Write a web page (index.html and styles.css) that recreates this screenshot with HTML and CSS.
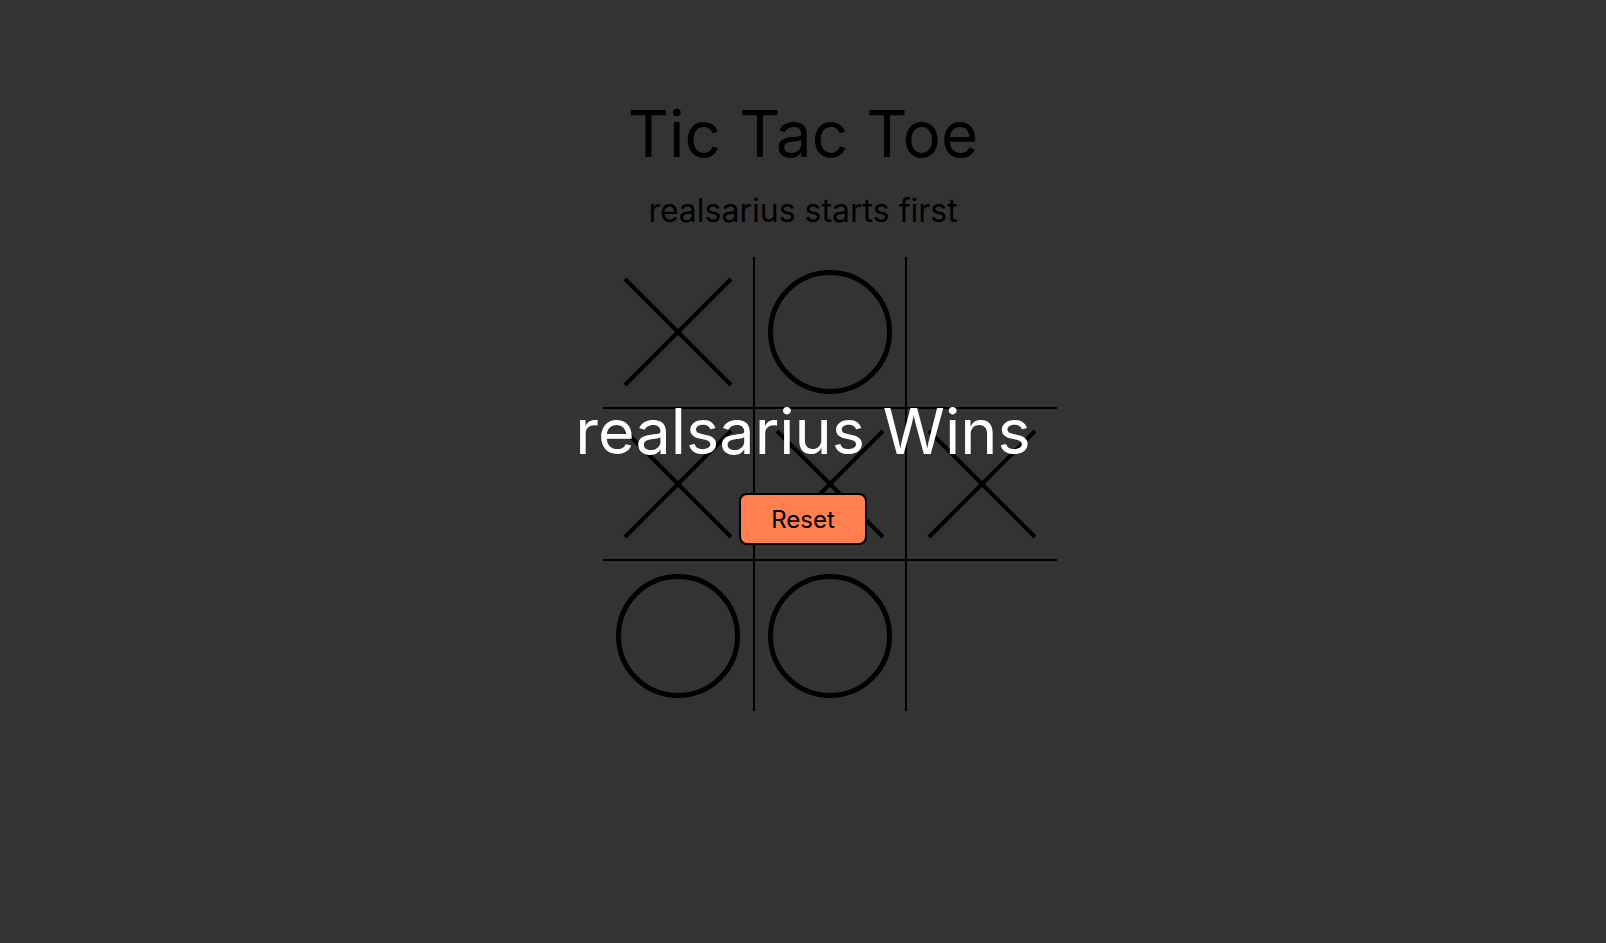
FILE: index.html
```html
<!DOCTYPE html>
<html lang="en">
<head>
<meta charset="utf-8">
<title>Tic Tac Toe</title>
<link rel="stylesheet" href="styles.css">
</head>
<body>
<main class="game">
  <h1 class="title">Tic Tac Toe</h1>
  <p class="subtitle">realsarius starts first</p>
  <div class="stage">
    <div class="board">
      <div class="cell"><svg class="mark cross" viewBox="0 0 106 106"><line x1="0" y1="0" x2="106" y2="106"/><line x1="106" y1="0" x2="0" y2="106"/></svg></div>
      <div class="cell"><svg class="mark nought" viewBox="0 0 124 124"><circle cx="62" cy="62" r="59.5"/></svg></div>
      <div class="cell"></div>
      <div class="cell"><svg class="mark cross" viewBox="0 0 106 106"><line x1="0" y1="0" x2="106" y2="106"/><line x1="106" y1="0" x2="0" y2="106"/></svg></div>
      <div class="cell"><svg class="mark cross" viewBox="0 0 106 106"><line x1="0" y1="0" x2="106" y2="106"/><line x1="106" y1="0" x2="0" y2="106"/></svg></div>
      <div class="cell"><svg class="mark cross" viewBox="0 0 106 106"><line x1="0" y1="0" x2="106" y2="106"/><line x1="106" y1="0" x2="0" y2="106"/></svg></div>
      <div class="cell"><svg class="mark nought" viewBox="0 0 124 124"><circle cx="62" cy="62" r="59.5"/></svg></div>
      <div class="cell"><svg class="mark nought" viewBox="0 0 124 124"><circle cx="62" cy="62" r="59.5"/></svg></div>
      <div class="cell"></div>
    </div>
    <div class="result">
      <p class="winner">realsarius Wins</p>
      <button class="reset" type="button">Reset</button>
    </div>
  </div>
</main>
</body>
</html>
```

FILE: styles.css
```css
html, body {
  margin: 0;
  padding: 0;
}

body {
  background: #333333;
  font-family: Inter, "Noto Sans", sans-serif;
  color: #000;
  min-height: 943px;
}

.game {
  display: flex;
  flex-direction: column;
  align-items: center;
  padding-top: 95px;
}

.title {
  margin: 0;
  font-size: 64px;
  font-weight: 400;
  line-height: 1.21;
}

.subtitle {
  margin: 20px 0 0;
  font-size: 32px;
  line-height: 1.21;
}

.stage {
  position: relative;
  margin-top: 26px;
  display: flex;
  justify-content: center;
  padding-left: 54px;
  width: 508px;
}

.board {
  display: grid;
  grid-template-columns: repeat(3, 150px);
  grid-template-rows: repeat(3, 150px);
  gap: 2px;
  background: #000;
}

.cell {
  background: #333333;
  display: flex;
  align-items: center;
  justify-content: center;
}

.mark {
  display: block;
  overflow: visible;
  fill: none;
  stroke: #000;
}

.cross {
  width: 106px;
  height: 106px;
  stroke-width: 4;
}

.nought {
  width: 124px;
  height: 124px;
  stroke-width: 5;
}

.result {
  position: absolute;
  top: 0;
  left: 0;
  right: 0;
  display: flex;
  flex-direction: column;
  align-items: center;
  padding-top: 136px;
}

.winner {
  margin: 0;
  font-size: 63px;
  line-height: 1.21;
  color: #fff;
}

.reset {
  margin-top: 24px;
  width: 128px;
  height: 52px;
  background: #ff7f50;
  border: 2px solid #000;
  border-radius: 8px;
  font-family: Inter, "Noto Sans", sans-serif;
  font-size: 24px;
  color: #000;
  padding: 0;
}
```
